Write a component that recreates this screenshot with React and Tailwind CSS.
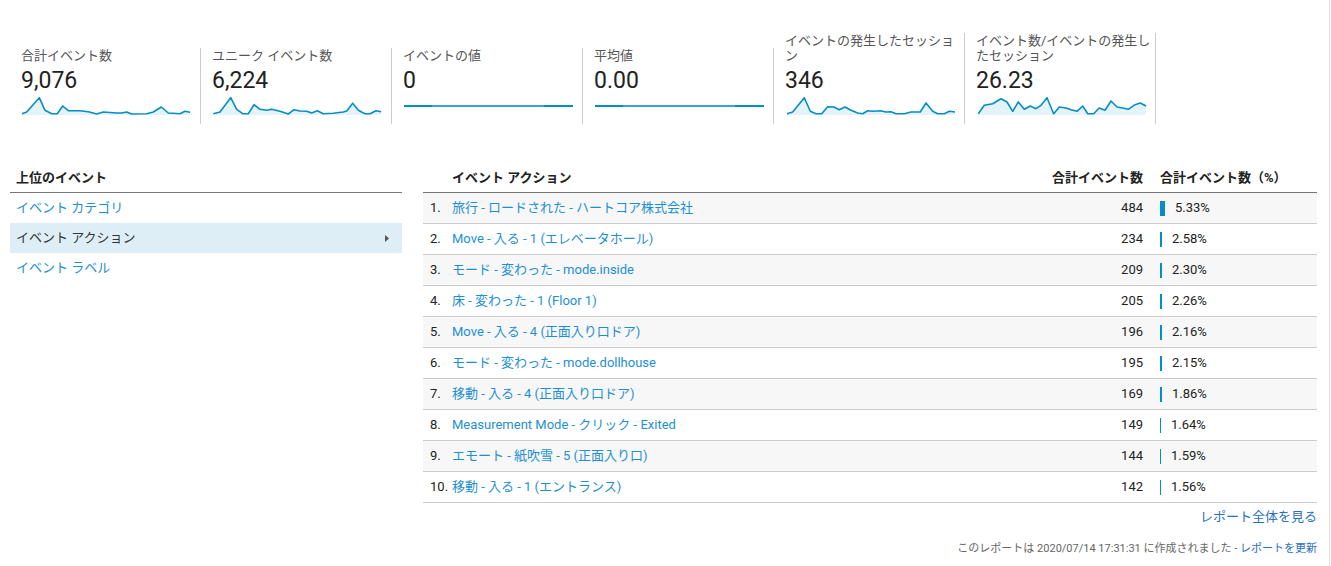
const LINK = 'text-[#1e8fd2]'

const METRICS = [
  {
    label: '合計イベント数',
    value: '9,076',
    pts: [[1,16.7],[5.7,15],[18.3,0.7],[24,13.3],[30.7,16.7],[36.3,16.7],[41.7,9],[47.3,13.7],[59,13.7],[67.3,14.7],[75.7,17],[82.3,15],[95.7,16],[100.7,16],[105.7,15],[110.7,17],[125.7,16.7],[132.3,15],[140.3,10],[147.3,16],[159,16.7],[164,14.3],[169,15.3]],
  },
  {
    label: 'ユニーク イベント数',
    value: '6,224',
    pts: [[1.3,16.7],[8,15],[18.7,0.7],[24.7,12.3],[30.7,16.7],[36.3,16.7],[42,7.7],[48,12.3],[54.7,13.3],[59.7,12.3],[68,14.3],[76.3,17],[82,12.7],[88,14],[94.7,14.3],[99.7,16],[105.3,13.7],[111.3,16.7],[121.3,16.3],[131.3,15],[134.7,14],[140.7,6.3],[146.3,13.3],[153,16.7],[158,16.7],[164,13.7],[169,14.7]],
  },
  { label: 'イベントの値', value: '0', flat: true },
  { label: '平均値', value: '0.00', flat: true },
  {
    label: 'イベントの発生したセッション',
    value: '346',
    pts: [[2,16.7],[7.7,15],[19.3,0.7],[25.3,14.3],[31,16.7],[36.7,16.7],[42.7,9.7],[48.7,10],[54.3,12.7],[60,10],[66,13.3],[72.7,16],[77.7,16.7],[82.7,13.7],[87.7,14.3],[95.3,13.7],[101,15],[106,14.7],[111,16.7],[119.3,16.7],[126,15],[135.3,15],[141,6],[147.7,14.3],[152.7,16.7],[159.3,16.7],[164.3,14.3],[170,15]],
  },
  {
    label: 'イベント数/イベントの発生したセッション',
    value: '26.23',
    pts: [[2.3,16.7],[8.3,8.3],[16.7,6.7],[25,1.7],[31,5],[36.7,14.3],[42.3,5],[48.3,12.3],[54.3,9],[60,11.7],[65,8.3],[71,0.7],[77.7,16.7],[83.3,10],[90,11],[95,12.7],[101,14.3],[106.7,9],[111.7,16.7],[117.7,16.7],[123.3,11],[129,13.3],[135,4],[141,10],[146.7,11],[152.3,12.3],[159,7.7],[164.3,6],[170,9]],
  },
]

const ROWS = [
  ['旅行 - ロードされた - ハートコア株式会社', 484, 5.33],
  ['Move - 入る - 1 (エレベータホール)', 234, 2.58],
  ['モード - 変わった - mode.inside', 209, 2.3],
  ['床 - 変わった - 1 (Floor 1)', 205, 2.26],
  ['Move - 入る - 4 (正面入り口ドア)', 196, 2.16],
  ['モード - 変わった - mode.dollhouse', 195, 2.15],
  ['移動 - 入る - 4 (正面入り口ドア)', 169, 1.86],
  ['Measurement Mode - クリック - Exited', 149, 1.64],
  ['エモート - 紙吹雪 - 5 (正面入り口)', 144, 1.59],
  ['移動 - 入る - 1 (エントランス)', 142, 1.56],
]

function Spark({ pts, flat }) {
  if (flat) {
    return (
      <div className="h-[18px] flex items-center">
        <div className="flex w-[169px] h-[2px] ml-[1px]">
          <div className="w-[28px] bg-[#058dc7]" />
          <div className="flex-1 bg-[#3d9fdb]" />
          <div className="w-[29px] bg-[#058dc7]" />
        </div>
      </div>
    )
  }
  const line = pts.map(p => p.join(',')).join(' ')
  const area = `${pts[0][0]},18 ${line} ${pts[pts.length - 1][0]},18`
  return (
    <svg width="170" height="18" viewBox="0 0 170 18" className="block overflow-visible">
      <polygon points={area} fill="#e4f2fa" />
      <polyline points={line} fill="none" stroke="#058dc7" strokeWidth="1.6" strokeLinejoin="round" />
    </svg>
  )
}

function MetricCard({ m }) {
  return (
    <div className="w-[191px] shrink-0 border-r border-[#ccc] pl-[11px] pr-[3px] pb-[9px]">
      <div className="text-[13px] leading-[15px] text-[#555]">{m.label}</div>
      <div className="mt-[5px] text-[23px] leading-[26px] text-[#222]">{m.value}</div>
      <div className="mt-[3px]">
        <Spark pts={m.pts} flat={m.flat} />
      </div>
    </div>
  )
}

function TopEvents() {
  return (
    <div className="w-[392px] shrink-0 text-[13px]">
      <div className="h-[23px] border-b border-[#777] flex items-end pb-[5px] pl-[6px] font-bold text-[#222]">
        上位のイベント
      </div>
      <div className={`h-[30px] flex items-center pl-[6px] ${LINK}`}>イベント カテゴリ</div>
      <div className="h-[30px] flex items-center justify-between pl-[6px] pr-[13px] bg-[#deeef7] text-[#333]">
        <span>イベント アクション</span>
        <svg width="4" height="7" viewBox="0 0 4 7"><path d="M0 0 L4 3.5 L0 7 Z" fill="#555" /></svg>
      </div>
      <div className={`h-[30px] flex items-center pl-[6px] ${LINK}`}>イベント ラベル</div>
    </div>
  )
}

function ActionTable() {
  return (
    <div className="flex-1 text-[13px]">
      <div className="h-[23px] border-b border-[#777] flex items-end pb-[5px] font-bold text-[#222]">
        <div className="w-[29px]" />
        <div className="flex-1">イベント アクション</div>
        <div className="w-[120px] text-right">合計イベント数</div>
        <div className="w-[174px] pl-[17px]">合計イベント数（%）</div>
      </div>
      {ROWS.map(([name, count, pct], i) => (
        <div
          key={i}
          className={`h-[31px] border-b border-[#ccc] flex items-center text-[#222] ${i % 2 === 0 ? 'bg-[#f7f7f7]' : 'bg-white'}`}
        >
          <div className="w-[29px] pl-[7px]">{i + 1}.</div>
          <div className={`flex-1 ${LINK}`}>{name}</div>
          <div className="w-[120px] text-right">{count}</div>
          <div className="w-[174px] pl-[17px] flex items-center">
            <div
              className="h-[15px] bg-[#058dc7]"
              style={{ width: Math.max(1, Math.round(pct * 0.9)) }}
            />
            <span className="ml-[10px]">{pct.toFixed(2)}%</span>
          </div>
        </div>
      ))}
      <div className="mt-[5px] text-right leading-[18px] text-[#2a6fbf]">レポート全体を見る</div>
      <div className="mt-[15px] text-right text-[11px] leading-[16px] text-[#666]">
        このレポートは 2020/07/14 17:31:31 に作成されました - <span className="text-[#2a6fbf]">レポートを更新</span>
      </div>
    </div>
  )
}

export default function App() {
  return (
    <div className="w-[1330px] min-h-[566px] border-r border-[#ddd] bg-white font-['Roboto','Noto_Sans_CJK_JP',sans-serif]">
      <div className="pt-[33px] pl-[10px] flex items-end">
        {METRICS.map(m => (
          <MetricCard key={m.label} m={m} />
        ))}
      </div>
      <div className="mt-[46px] pl-[10px] pr-[12px] flex gap-[21px]">
        <TopEvents />
        <ActionTable />
      </div>
    </div>
  )
}
